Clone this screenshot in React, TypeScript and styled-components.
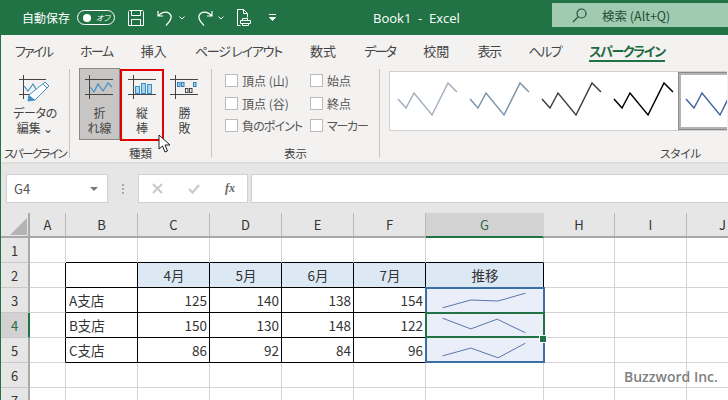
import React from "react";
import styled, { createGlobalStyle } from "styled-components";

const GlobalStyle = createGlobalStyle`
  html, body { margin: 0; padding: 0; }
  body {
    width: 728px;
    height: 400px;
    overflow: hidden;
    font-family: "Noto Sans CJK JP", "Noto Sans", sans-serif;
    font-feature-settings: "palt";
    color: #444;
  }
`;

const GREEN = "#217346";

const Window = styled.div`
  position: relative;
  width: 727px;
  height: 400px;
  border-left: 1px solid ${GREEN};
  overflow: hidden;
  background: #fff;
`;

/* title bar */
const TitleBar = styled.div`
  display: flex;
  align-items: center;
  height: 35px;
  background: ${GREEN};
  color: #fff;
`;

const AutoSave = styled.span`
  margin-left: 21px;
  font-size: 12px;
  white-space: nowrap;
`;

const Toggle = styled.span`
  display: flex;
  align-items: center;
  justify-content: space-between;
  flex: none;
  box-sizing: border-box;
  width: 38px;
  height: 15px;
  margin-left: 7px;
  padding: 0 4px 0 5px;
  border: 1px solid #fff;
  border-radius: 8px;
  font-size: 8px;
  font-style: italic;
  &::before {
    content: "";
    width: 8px;
    height: 8px;
    border-radius: 50%;
    background: #fff;
  }
`;

const QatIcon = styled.svg<{ $ml: number }>`
  flex: none;
  margin-left: ${(p) => p.$ml}px;
  fill: none;
  stroke: #fff;
  stroke-width: 1;
`;

const DocTitle = styled.span`
  margin-left: 97px;
  font-size: 13px;
  font-family: "Open Sans", sans-serif;
  white-space: pre;
`;

const SearchBox = styled.div`
  display: flex;
  align-items: center;
  flex: none;
  width: 176px;
  height: 24px;
  margin: -5px 0 0 auto;
  padding-left: 20px;
  box-sizing: border-box;
  background: #a0cbb0;
  color: #1f4f38;
  font-size: 12.5px;
`;

const SearchText = styled.span`
  margin-left: 15px;
`;

/* tabs */
const TabBar = styled.div`
  display: flex;
  align-items: center;
  gap: 28px;
  height: 31px;
  padding-left: 14px;
  background: #f3f2f1;
  font-size: 13px;
  color: #444;
`;

const Tab = styled.span<{ $active?: boolean; $ls?: number }>`
  position: relative;
  white-space: pre;
  letter-spacing: ${(p) => p.$ls ?? 0}px;
  font-weight: ${(p) => (p.$active ? 700 : 400)};
  color: ${(p) => (p.$active ? "#1d6a40" : "#444")};
  ${(p) =>
    p.$active &&
    `&::after {
      content: "";
      position: absolute;
      left: 0;
      right: 0;
      bottom: -2px;
      height: 2px;
      background: ${GREEN};
    }`}
`;

/* ribbon */
const Ribbon = styled.div`
  display: flex;
  height: 96px;
  background: #f3f2f1;
  box-shadow: 0 1px 2px #d8d6d4;
  position: relative;
`;

const Group = styled.div<{ $w: number; $line?: boolean }>`
  flex: none;
  box-sizing: border-box;
  width: ${(p) => p.$w}px;
  height: 89px;
  margin-top: 3px;
  border-right: ${(p) => (p.$line ? "1px solid #c8c6c4" : "none")};
`;

const GroupBody = styled.div<{ $pl?: number }>`
  display: flex;
  height: 75px;
  padding-left: ${(p) => p.$pl ?? 0}px;
`;

const GroupLabel = styled.div<{ $ls?: number }>`
  height: 18px;
  line-height: 18px;
  font-size: 11.5px;
  letter-spacing: ${(p) => p.$ls ?? 0}px;
  text-align: center;
  color: #444;
  white-space: nowrap;
`;

const DataButton = styled.div`
  display: flex;
  flex-direction: column;
  align-items: center;
  width: 68px;
  padding-top: 6px;
  font-size: 12px;
  line-height: 15px;
  text-align: center;
`;

const DataText = styled.div`
  margin-top: 2px;
  letter-spacing: -0.4px;
`;

const TypeButton = styled.div<{ $on?: boolean; $marked?: boolean }>`
  display: flex;
  flex-direction: column;
  align-items: center;
  box-sizing: border-box;
  width: ${(p) => (p.$marked ? 44 : 41)}px;
  height: 72px;
  margin-top: ${(p) => (p.$on ? -1 : 0)}px;
  padding-top: ${(p) => (p.$marked ? 4 : 6)}px;
  background: ${(p) => (p.$on ? "#c8c6c4" : "transparent")};
  border: ${(p) => (p.$on ? "1px solid #8a8886" : p.$marked ? "2px solid #e00000" : "none")};
  font-size: 12px;
  line-height: 15px;
  text-align: center;
`;

const TypeText = styled.div`
  margin-top: 5px;
`;

const CheckColumn = styled.div<{ $w: number }>`
  display: flex;
  flex-direction: column;
  flex: none;
  width: ${(p) => p.$w}px;
  padding-top: 5px;
  gap: 9.500px;
`;

const CheckRow = styled.label<{ $ls?: number }>`
  display: flex;
  align-items: center;
  gap: 4px;
  height: 13px;
  font-size: 12px;
  letter-spacing: ${(p) => p.$ls ?? 0}px;
  white-space: pre;
  color: #555;
`;

const CheckBox = styled.span`
  flex: none;
  box-sizing: border-box;
  width: 13px;
  height: 13px;
  background: #fff;
  border: 1px solid #bdbbb9;
`;

const Gallery = styled.div`
  display: flex;
  width: 338px;
  height: 60px;
  margin: 2px 0 0 9px;
  background: #fff;
  border: 1px solid #d2d0ce;
  border-right: none;
  box-sizing: border-box;
  overflow: hidden;
`;

const GalleryItem = styled.div<{ $sel?: boolean }>`
  flex: none;
  box-sizing: border-box;
  width: 72px;
  height: 58px;
  ${(p) => p.$sel && "border: 3px solid #b4b4b4; outline: 1px solid #8a8a8a; outline-offset: -1px;"}
`;

const StyleLabel = styled(GroupLabel)`
  text-align: left;
  padding-left: 280px;
`;

/* formula bar */
const FormulaBand = styled.div`
  display: flex;
  height: 51px;
  box-sizing: border-box;
  padding: 12px 0 10px 5px;
  background: #e6e6e6;
`;

const NameBox = styled.div`
  display: flex;
  align-items: center;
  justify-content: space-between;
  box-sizing: border-box;
  width: 102px;
  height: 29px;
  padding: 0 9px 0 7px;
  background: #fff;
  border: 1px solid #d0d0d0;
  font-size: 13px;
  color: #555;
`;

const Caret = styled.span`
  width: 0;
  height: 0;
  border-left: 4px solid transparent;
  border-right: 4px solid transparent;
  border-top: 4px solid #777;
`;

const Dots = styled.div`
  display: flex;
  flex-direction: column;
  justify-content: center;
  gap: 2px;
  width: 30px;
  align-items: center;
  &::before, &::after, & > i {
    content: "";
    width: 2px;
    height: 2px;
    background: #aaa;
  }
`;

const FxButtons = styled.div`
  display: flex;
  align-items: center;
  box-sizing: border-box;
  width: 110px;
  height: 29px;
  background: #fff;
  border: 1px solid #d0d0d0;
  padding-left: 13px;
  gap: 25px;
`;

const FxText = styled.span`
  font-family: "Liberation Serif", serif;
  font-style: italic;
  font-weight: 700;
  font-size: 12px;
  color: #666;
`;

const FormulaInput = styled.div`
  flex: 1;
  height: 29px;
  box-sizing: border-box;
  margin-left: 3px;
  background: #fff;
  border: 1px solid #d0d0d0;
  border-right: none;
`;

/* sheet */
const Sheet = styled.div`
  position: relative;
  display: grid;
  grid-template-columns: 29px 36px 72px 72px 72px 72px 72px 118px 71px 72px 72px;
  grid-auto-rows: 25px;
  font-size: 13.5px;
  color: #333;
`;

const ColHead = styled.div<{ $on?: boolean }>`
  display: flex;
  align-items: center;
  justify-content: center;
  box-sizing: border-box;
  background: ${(p) => (p.$on ? "#d2d2d2" : "#e6e6e6")};
  border-right: 1px solid ${(p) => (p.$on ? "#d2d2d2" : "#b8b8b8")};
  border-bottom: ${(p) => (p.$on ? `2px solid ${GREEN}` : "2px solid #a8a8a8")};
  color: ${(p) => (p.$on ? "#2b6a48" : "#333")};
  font-size: 13px;
`;

const Corner = styled.div`
  box-sizing: border-box;
  background: #e6e6e6;
  border-right: 2px solid #a8a8a8;
  border-bottom: 2px solid #a8a8a8;
  &::after {
    content: "";
    display: block;
    width: 17px;
    height: 17px;
    margin: 5px 0 0 9px;
    background: #b4b4b4;
    clip-path: polygon(100% 0, 100% 100%, 0 100%);
  }
`;

const RowHead = styled.div<{ $on?: boolean }>`
  display: flex;
  align-items: center;
  justify-content: center;
  box-sizing: border-box;
  background: ${(p) => (p.$on ? "#d2d2d2" : "#e6e6e6")};
  border-right: 2px solid ${(p) => (p.$on ? GREEN : "#a8a8a8")};
  border-bottom: 1px solid #c8c8c8;
  color: ${(p) => (p.$on ? "#2b6a48" : "#333")};
  font-size: 13px;
`;

const Cell = styled.div<{
  $right?: boolean;
  $bottom?: boolean;
  $num?: boolean;
  $center?: boolean;
  $fill?: string;
}>`
  display: flex;
  align-items: center;
  box-sizing: border-box;
  padding: 0 2px 0 3px;
  justify-content: ${(p) => (p.$center ? "center" : p.$num ? "flex-end" : "flex-start")};
  background: ${(p) => p.$fill ?? "#fff"};
  border-right: 1px solid ${(p) => (p.$right ? "#000" : "#d4d4d4")};
  border-bottom: 1px solid ${(p) => (p.$bottom ? "#000" : "#d4d4d4")};
`;

const Selection = styled.div<{ $rows: string; $color: string }>`
  position: absolute;
  inset: -1px -1px 0 -1px;
  grid-column: 8 / 9;
  grid-row: ${(p) => p.$rows};
  border: 2px solid ${(p) => p.$color};
  pointer-events: none;
  z-index: 1;
`;

const FillHandle = styled.div`
  position: absolute;
  left: 538px;
  top: 122px;
  width: 6px;
  height: 6px;
  background: ${GREEN};
  border: 1px solid #fff;
  z-index: 2;
`;

const Watermark = styled.div`
  position: absolute;
  left: 623px;
  top: 367px;
  font-family: "Open Sans", sans-serif;
  font-weight: 600;
  font-size: 14px;
  color: #808080;
  white-space: nowrap;
`;

const Pointer = styled.svg`
  position: absolute;
  left: 157px;
  top: 134px;
  z-index: 3;
`;

const spark = (pts: number[][]) => pts.map((p) => p.join(",")).join(" ");
const GALLERY_SHAPE = [[8, 27], [16, 36], [24, 21], [42, 43], [58, 11], [67, 20]];

const GallerySpark: React.FC<{ color: string; dx?: number; dy?: number }> = ({ color, dx = 0, dy = 0 }) => (
  <svg width="72" height="58" viewBox="0 0 72 58">
    <polyline
      points={spark(GALLERY_SHAPE.map(([x, y]) => [x + dx, y + dy]))}
      fill="none"
      stroke={color}
      strokeWidth="1.500"
    />
  </svg>
);

const CellSpark: React.FC<{ points: number[][] }> = ({ points }) => (
  <svg width="118" height="25" viewBox="0 0 118 25" style={{ marginLeft: -3 }}>
    <polyline points={spark(points)} fill="none" stroke="#5573a8" strokeWidth="1" />
  </svg>
);

const LineIcon = () => (
  <svg width="29" height="25" viewBox="0 0 29 25">
    <path d="M4.500 0v24M0 4.500h28M0 19.500h28" stroke="#444" fill="none" />
    <polyline points="5,12 9,17 13,9 18,16 23,8 27,12" fill="none" stroke="#3f8fc4" strokeWidth="1.200" />
  </svg>
);

const ColumnIcon = () => (
  <svg width="29" height="25" viewBox="0 0 29 25">
    <path d="M5.500 0v24M0 4.500h28M0 19.500h28" stroke="#444" fill="none" />
    <g fill="#a8d4ef" stroke="#3f8fc4">
      <rect x="7.500" y="11.500" width="4" height="7" />
      <rect x="13.500" y="8.500" width="4" height="10" />
      <rect x="19.500" y="9.500" width="4" height="9" />
    </g>
  </svg>
);

const WinLossIcon = () => (
  <svg width="29" height="25" viewBox="0 0 29 25">
    <path d="M5.500 0v24M0 4.500h28M0 19.500h28" stroke="#444" fill="none" />
    <g fill="#a8d4ef" stroke="#2f7fb8">
      <rect x="7.500" y="7.500" width="2.500" height="4" />
      <rect x="11.500" y="7.500" width="2.500" height="4" />
      <rect x="23.500" y="7.500" width="2.500" height="4" />
    </g>
    <g fill="#f3f2f1" stroke="#444">
      <rect x="15.500" y="13.500" width="2.500" height="4" />
      <rect x="19.500" y="13.500" width="2.500" height="4" />
    </g>
  </svg>
);

const EditDataIcon = () => (
  <svg width="32" height="28" viewBox="0 0 32 28">
    <path d="M4.500 0v24M0 4.500h27M0 19.500h16" stroke="#444" fill="none" />
    <polyline points="5,11 9,16 14,9 17,14" fill="none" stroke="#3f8fc4" strokeWidth="1.200" />
    <path d="M9 26l1-6L26 7l4 4-14 14z" fill="#fff" stroke="#3f8fc4" />
    <path d="M9 26l1-6 6 5z" fill="#3f8fc4" />
    <path d="M24 9l4 4" stroke="#3f8fc4" />
  </svg>
);

const Chevron: React.FC<{ ml: number }> = ({ ml }) => (
  <QatIcon $ml={ml} width="6" height="4" viewBox="0 0 6 4">
    <path d="M.5.5L3 3 5.500.5" />
  </QatIcon>
);

type Row = { label: string; months: number[]; line: number[][] };

const COLS = ["A", "B", "C", "D", "E", "F", "G", "H", "I", "J"];
const HEAD = "#dce9f5";
const SELECTED = "#e9eef8";

const ROWS: Row[] = [
  { label: "A支店", months: [125, 140, 138, 154], line: [[17, 20], [46, 12], [74, 13], [102, 5]] },
  { label: "B支店", months: [150, 130, 148, 122], line: [[17, 5], [46, 16], [73, 6], [102, 20]] },
  { label: "C支店", months: [86, 92, 84, 96], line: [[17, 18], [46, 10], [74, 20], [102, 5]] },
];

const EmptyRow: React.FC<{ n: number }> = ({ n }) => (
  <>
    <RowHead>{n}</RowHead>
    {COLS.map((c) => (
      <Cell key={c} $bottom={n === 1 && "BCDEFG".includes(c)} />
    ))}
  </>
);

const Tail = () => (
  <>
    <Cell />
    <Cell />
    <Cell />
  </>
);

export default function App() {
  return (
    <>
      <GlobalStyle />
      <Window>
        <TitleBar>
          <AutoSave>自動保存</AutoSave>
          <Toggle>オフ</Toggle>
          <QatIcon $ml={13} width="16" height="16" viewBox="0 0 16 16">
            <path d="M1.500.5h13l1 1v14H.5V1.500zM3.500.5v5h9v-5M3.500 15.500v-6h9v6" />
          </QatIcon>
          <QatIcon $ml={13} width="16" height="16" viewBox="0 0 16 16" style={{ strokeWidth: 1.2 }}>
            <path d="M1 1v5h5M1.500 6C4 2 9 1 12.500 3.500c3 2.500 2 6.500-3.500 12" />
          </QatIcon>
          <Chevron ml={6} />
          <QatIcon $ml={12} width="16" height="16" viewBox="0 0 16 16" style={{ strokeWidth: 1.2 }}>
            <path d="M15 1v5h-5M14.500 6C12 2 7 1 3.500 3.500c-3 2.500-2 6.500 3.500 12" />
          </QatIcon>
          <Chevron ml={5} />
          <QatIcon $ml={13} width="15" height="17" viewBox="0 0 15 17">
            <path d="M.5 16.500V.5h6l4 4v4M6.500.5v4h4M.5 16.500h3M5.500 9.500h5v2h-5zM3.500 11.500h10v3h-10zM5.500 14.500h6v2h-6z" />
          </QatIcon>
          <QatIcon $ml={17} width="7" height="7" viewBox="0 0 7 7">
            <path d="M0 .5h7" />
            <path d="M.5 3.500h6L3.500 6.500z" fill="#fff" />
          </QatIcon>
          <DocTitle>Book1  -  Excel</DocTitle>
          <SearchBox>
            <svg width="15" height="15" viewBox="0 0 15 15" fill="none" stroke="#1f4f38" strokeWidth="1.200">
              <circle cx="9.500" cy="5.500" r="4.500" />
              <path d="M6.300 8.700L1 14" />
            </svg>
            <SearchText>検索 (Alt+Q)</SearchText>
          </SearchBox>
        </TitleBar>

        <TabBar>
          <Tab $ls={-2}>ファイル</Tab>
          <Tab $ls={-1.5}>ホーム</Tab>
          <Tab>挿入</Tab>
          <Tab $ls={-1.2}>ページ レイアウト</Tab>
          <Tab>数式</Tab>
          <Tab $ls={-1.7}>データ</Tab>
          <Tab>校閲</Tab>
          <Tab $ls={-1.5}>表示</Tab>
          <Tab $ls={-1.5}>ヘルプ</Tab>
          <Tab $active $ls={-1.3}>スパークライン</Tab>
        </TabBar>

        <Ribbon>
          <Group $w={69} $line>
            <GroupBody>
              <DataButton>
                <EditDataIcon />
                <DataText>データの</DataText>
                <div>編集 ⌄</div>
              </DataButton>
            </GroupBody>
            <GroupLabel $ls={-1.6}>スパークライン</GroupLabel>
          </Group>
          <Group $w={142} $line>
            <GroupBody $pl={9}>
              <TypeButton $on>
                <LineIcon />
                <TypeText>
                  折<br />れ線
                </TypeText>
              </TypeButton>
              <TypeButton $marked>
                <ColumnIcon />
                <TypeText>
                  縦<br />棒
                </TypeText>
              </TypeButton>
              <TypeButton>
                <WinLossIcon />
                <TypeText>
                  勝<br />敗
                </TypeText>
              </TypeButton>
            </GroupBody>
            <GroupLabel>種類</GroupLabel>
          </Group>
          <Group $w={168} $line>
            <GroupBody $pl={13}>
              <CheckColumn $w={85}>
                <CheckRow><CheckBox />頂点 (山)</CheckRow>
                <CheckRow><CheckBox />頂点 (谷)</CheckRow>
                <CheckRow $ls={-0.9}><CheckBox />負のポイント</CheckRow>
              </CheckColumn>
              <CheckColumn $w={68}>
                <CheckRow><CheckBox />始点</CheckRow>
                <CheckRow><CheckBox />終点</CheckRow>
                <CheckRow $ls={-1.2}><CheckBox />マーカー</CheckRow>
              </CheckColumn>
            </GroupBody>
            <GroupLabel>表示</GroupLabel>
          </Group>
          <Group $w={347}>
            <GroupBody>
              <Gallery>
                <GalleryItem><GallerySpark color="#a3b0be" /></GalleryItem>
                <GalleryItem><GallerySpark color="#7f94a8" /></GalleryItem>
                <GalleryItem><GallerySpark color="#404040" /></GalleryItem>
                <GalleryItem><GallerySpark color="#000" /></GalleryItem>
                <GalleryItem $sel><GallerySpark color="#44659f" dx={-3} dy={-3} /></GalleryItem>
              </Gallery>
            </GroupBody>
            <StyleLabel>スタイル</StyleLabel>
          </Group>
        </Ribbon>

        <FormulaBand>
          <NameBox>
            G4
            <Caret />
          </NameBox>
          <Dots>
            <i />
          </Dots>
          <FxButtons>
            <svg width="11" height="11" viewBox="0 0 11 11" stroke="#c8c8c8" strokeWidth="2">
              <path d="M1 1l9 9M10 1l-9 9" />
            </svg>
            <svg width="12" height="10" viewBox="0 0 12 10" fill="none" stroke="#c8c8c8" strokeWidth="2.200">
              <path d="M1 5l3.500 3.500L11 1" />
            </svg>
            <FxText>fx</FxText>
          </FxButtons>
          <FormulaInput />
        </FormulaBand>

        <Sheet>
          <Corner />
          {COLS.map((c) => (
            <ColHead key={c} $on={c === "G"}>
              {c}
            </ColHead>
          ))}

          <EmptyRow n={1} />

          <RowHead>2</RowHead>
          <Cell $right />
          <Cell $right $bottom />
          {["4月", "5月", "6月", "7月"].map((m) => (
            <Cell key={m} $right $bottom $center $fill={HEAD}>
              {m}
            </Cell>
          ))}
          <Cell $right $bottom $center $fill={HEAD}>
            推移
          </Cell>
          <Tail />

          {ROWS.map((row, i) => (
            <React.Fragment key={row.label}>
              <RowHead $on={i === 1}>{i + 3}</RowHead>
              <Cell $right />
              <Cell $right $bottom>
                {row.label}
              </Cell>
              {row.months.map((v, j) => (
                <Cell key={j} $right $bottom $num>
                  {v}
                </Cell>
              ))}
              <Cell $right $bottom $fill={SELECTED}>
                <CellSpark points={row.line} />
              </Cell>
              <Tail />
            </React.Fragment>
          ))}

          <EmptyRow n={6} />
          <EmptyRow n={7} />

          <Selection $rows="4 / 7" $color="#3a6ea5" />
          <Selection $rows="5 / 6" $color={GREEN} />
          <FillHandle />
        </Sheet>

        <Pointer width="14" height="20" viewBox="0 0 14 20">
          <path d="M1 1v14l3.500-3 2.500 6 2.500-1-2.500-6h5z" fill="#fff" stroke="#222" strokeWidth="1" />
        </Pointer>
        <Watermark>Buzzword Inc.</Watermark>
      </Window>
    </>
  );
}
